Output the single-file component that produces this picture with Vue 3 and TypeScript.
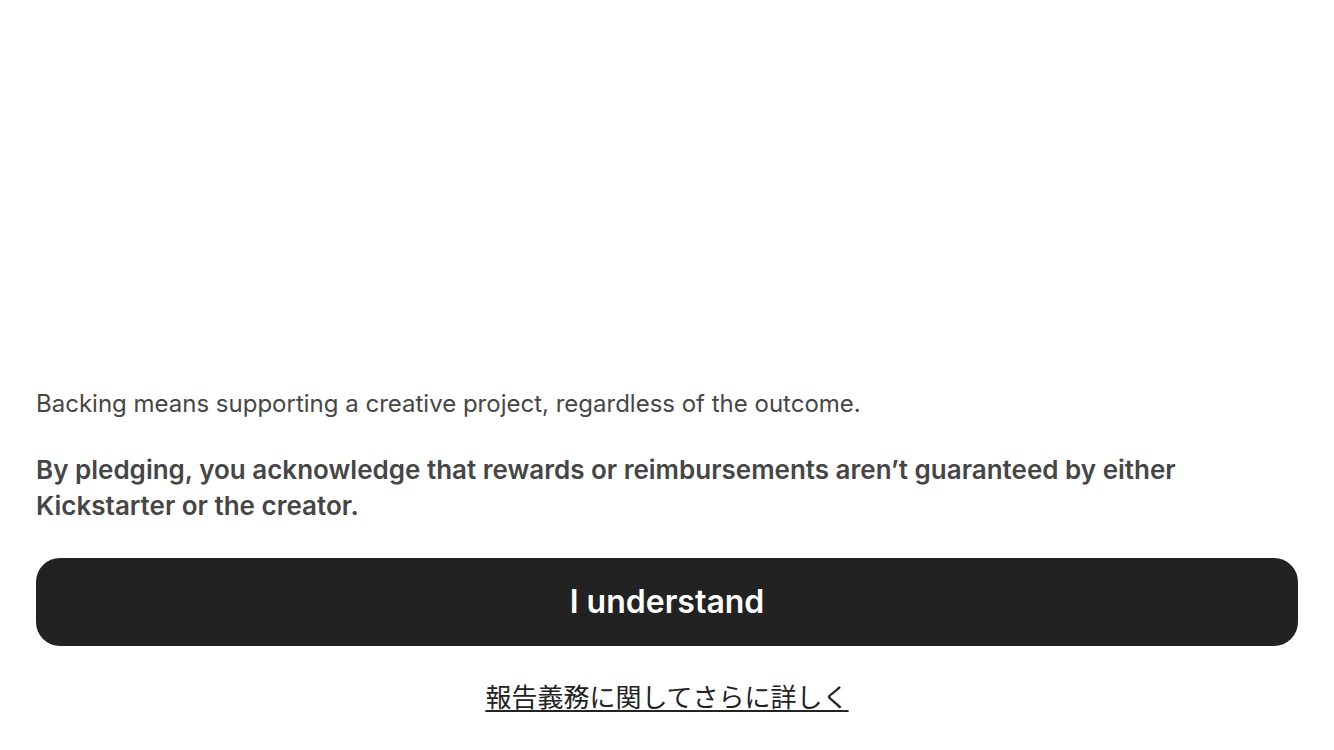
<script setup lang="ts">
const intro: string = 'Backing means supporting a creative project, regardless of the outcome.'
const notice: string = 'By pledging, you acknowledge that rewards or reimbursements aren’t guaranteed by either Kickstarter or the creator.'
</script>

<template>
  <main class="sheet">
    <p class="intro">{{ intro }}</p>
    <p class="notice">{{ notice }}</p>
    <button class="confirm" type="button">I understand</button>
    <a class="more" href="#" lang="ja">報告義務に関してさらに詳しく</a>
  </main>
</template>

<style>
body {
  margin: 0;
  background: #fff;
}
</style>

<style scoped>
.sheet {
  box-sizing: border-box;
  min-height: 100vh;
  padding: 36px;
  display: flex;
  flex-direction: column;
  justify-content: flex-end;
  font-family: Inter, "Noto Sans CJK JP", sans-serif;
  color: #464646;
}
.intro,
.notice {
  margin: 0;
}
.intro {
  margin-bottom: 32px;
  font-size: 24px;
  line-height: 32px;
}
.notice {
  margin-bottom: 34px;
  font-size: 26px;
  font-weight: 600;
  line-height: 36px;
}
.confirm {
  min-height: 88px;
  border: 0;
  border-radius: 24px;
  background: #222;
  color: #fff;
  font: 600 32px/40px Inter, sans-serif;
}
.more {
  align-self: center;
  margin-top: 32px;
  color: #222;
  font-family: "Noto Sans CJK JP", sans-serif;
  font-size: 26px;
  line-height: 36px;
  text-decoration: underline;
  text-decoration-thickness: 2px;
  text-underline-offset: 3px;
}
</style>
